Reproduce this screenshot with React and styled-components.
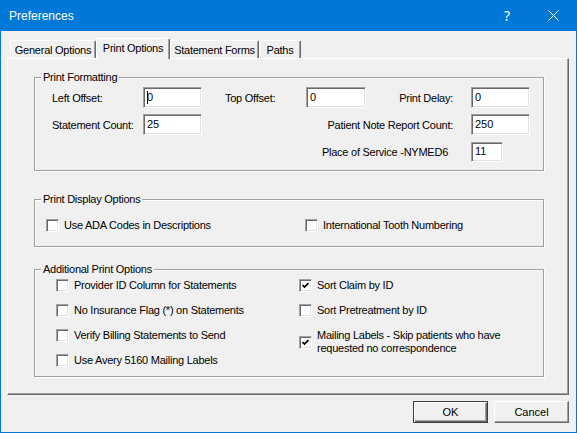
import React from "react";
import styled, { createGlobalStyle } from "styled-components";

const GlobalStyle = createGlobalStyle`
  html, body {
    margin: 0;
    padding: 0;
    background: #f0f0f0;
  }
  body {
    font-family: "Liberation Sans", Arial, sans-serif;
    font-size: 11px;
    color: #000;
  }
  * {
    box-sizing: border-box;
  }
`;

const Window = styled.div`
  width: 577px;
  height: 433px;
  display: flex;
  flex-direction: column;
  background: #0078d7;
  padding: 0 1px 1px;
`;

const TitleBar = styled.div`
  height: 31px;
  flex: none;
  display: flex;
  align-items: center;
  color: #fff;
  font-family: "Liberation Sans", Arial, sans-serif;
  font-size: 12px;
  padding-left: 8px;
`;

const Title = styled.span`
  flex: 1;
`;

const TitleButton = styled.div`
  width: 46px;
  height: 31px;
  display: flex;
  align-items: center;
  justify-content: center;
  font-family: "Noto Sans", sans-serif;
  font-size: 14px;
`;

const Body = styled.div`
  flex: 1;
  background: #f0f0f0;
  padding: 7px 7px 0 6px;
  display: flex;
  flex-direction: column;
  letter-spacing: -0.25px;
`;

const TabStrip = styled.div`
  height: 20px;
  display: flex;
  align-items: flex-end;
  padding-left: 3px;
`;

const Tab = styled.div`
  width: ${(p) => p.$w}px;
  height: ${(p) => (p.$active ? 21 : 18)}px;
  margin-bottom: ${(p) => (p.$active ? -1 : 0)}px;
  padding-bottom: ${(p) => (p.$active ? 3 : 0)}px;
  position: relative;
  z-index: ${(p) => (p.$active ? 1 : 0)};
  background: #f0f0f0;
  border-top: 1px solid #fff;
  border-left: 1px solid #fff;
  border-right: 1px solid #696969;
  box-shadow: inset -1px 0 0 #a0a0a0;
  border-radius: 2px 2px 0 0;
  display: flex;
  align-items: center;
  justify-content: center;
  white-space: nowrap;
`;

const Panel = styled.div`
  height: 337px;
  flex: none;
  border-top: 1px solid #fff;
  border-left: 1px solid #fff;
  border-right: 1px solid #696969;
  border-bottom: 1px solid #696969;
  box-shadow: inset -1px -1px 0 #a0a0a0;
  padding: 0 24px 0 26px;
`;

const Group = styled.div`
  margin-top: ${(p) => p.$top}px;
  border: 1px solid #a0a0a0;
  box-shadow: inset 1px 1px 0 #fff, 1px 1px 0 #fff;
`;

const Legend = styled.div`
  width: fit-content;
  margin: -7px 0 0 6px;
  padding: 0 2px;
  line-height: 13px;
  background: #f0f0f0;
  white-space: nowrap;
`;

const FormRows = styled.div`
  display: flex;
  flex-direction: column;
  gap: 6px;
  padding: 3px 13px 8px 17px;
`;

const Row = styled.div`
  height: 21px;
  display: flex;
  align-items: center;
`;

const Label = styled.span`
  flex: ${(p) => (p.$w ? "none" : "1")};
  width: ${(p) => (p.$w ? `${p.$w}px` : "auto")};
  margin-left: ${(p) => p.$ml || 0}px;
  padding-right: ${(p) => p.$pr || 0}px;
  text-align: ${(p) => (p.$right ? "right" : "left")};
  white-space: nowrap;
`;

const Field = styled.div`
  width: ${(p) => p.$w}px;
  height: ${(p) => p.$h || 21}px;
  margin-right: ${(p) => p.$mr || 0}px;
  flex: none;
  background: #fff;
  border-top: 1px solid #a0a0a0;
  border-left: 1px solid #a0a0a0;
  border-right: 1px solid #fff;
  border-bottom: 1px solid #fff;
  box-shadow: inset 1px 1px 0 #696969, inset -1px -1px 0 #e3e3e3;
  display: flex;
  align-items: center;
  padding: 0 0 1px 3px;
  letter-spacing: 0;
`;

const Caret = styled.span`
  display: inline-block;
  width: 1px;
  height: 13px;
  background: #000;
  margin-right: -1px;
`;

const CheckGrid = styled.div`
  display: grid;
  grid-template-columns: ${(p) => p.$col}px 1fr;
  padding: ${(p) => p.$pad};
`;

const CheckColumn = styled.div`
  display: flex;
  flex-direction: column;
  gap: 12px;
`;

const CheckItem = styled.div`
  display: flex;
  align-items: center;
  gap: 5px;
  line-height: 13px;
  min-height: 13px;
`;

const Box = styled.span`
  width: 13px;
  height: 13px;
  flex: none;
  background: #fff;
  border-top: 1px solid #a0a0a0;
  border-left: 1px solid #a0a0a0;
  border-right: 1px solid #fff;
  border-bottom: 1px solid #fff;
  box-shadow: inset 1px 1px 0 #696969, inset -1px -1px 0 #e3e3e3;
  display: flex;
  align-items: center;
  justify-content: center;
`;

const ButtonRow = styled.div`
  margin-top: 6px;
  display: flex;
  justify-content: flex-end;
  gap: 6px;
`;

const Button = styled.button`
  width: 75px;
  height: 22px;
  font-family: "Liberation Sans", Arial, sans-serif;
  font-size: 11px;
  color: #000;
  background: #f0f0f0;
  padding: 0;
  border: 1px solid;
  border-color: ${(p) =>
    p.$default ? "#3c3c3c" : "#fff #696969 #696969 #fff"};
  box-shadow: ${(p) =>
    p.$default
      ? "inset 1px 1px 0 #fff, inset -1px -1px 0 #696969, inset -2px -2px 0 #a0a0a0"
      : "inset -1px -1px 0 #a0a0a0"};
`;

const Check = ({ checked, children }) => (
  <CheckItem>
    <Box>
      {checked && (
        <svg width="7" height="7" viewBox="0 0 7 7">
          <path d="M0.5 3 L2.5 5 L6.5 1" fill="none" stroke="#000" strokeWidth="1.7" />
        </svg>
      )}
    </Box>
    <span>{children}</span>
  </CheckItem>
);

export default function App() {
  return (
    <>
      <GlobalStyle />
      <Window>
        <TitleBar>
          <Title>Preferences</Title>
          <TitleButton>?</TitleButton>
          <TitleButton>
            <svg width="11" height="11" viewBox="0 0 11 11">
              <path d="M0.5 0.5 L10.5 10.5 M10.5 0.5 L0.5 10.5" stroke="#fff" strokeWidth="1" />
            </svg>
          </TitleButton>
        </TitleBar>
        <Body>
          <TabStrip>
            <Tab $w={86}>General Options</Tab>
            <Tab $w={74} $active>Print Options</Tab>
            <Tab $w={89}>Statement Forms</Tab>
            <Tab $w={42}>Paths</Tab>
          </TabStrip>
          <Panel>
            <Group $top={18}>
              <Legend>Print Formatting</Legend>
              <FormRows>
                <Row>
                  <Label $w={91}>Left Offset:</Label>
                  <Field $w={59}>
                    <Caret />0
                  </Field>
                  <Label $w={81} $ml={23}>Top Offset:</Label>
                  <Field $w={60}>0</Field>
                  <Label $right $pr={18}>Print Delay:</Label>
                  <Field $w={59}>0</Field>
                </Row>
                <Row>
                  <Label $w={91}>Statement Count:</Label>
                  <Field $w={59}>25</Field>
                  <Label $right $pr={18}>Patient Note Report Count:</Label>
                  <Field $w={59}>250</Field>
                </Row>
                <Row>
                  <Label $right $pr={23}>Place of Service -NYMED6</Label>
                  <Field $w={32} $h={20} $mr={27}>11</Field>
                </Row>
              </FormRows>
            </Group>

            <Group $top={28}>
              <Legend>Print Display Options</Legend>
              <CheckGrid $col={259} $pad="13px 0 14px 11px">
                <Check>Use ADA Codes in Descriptions</Check>
                <Check>International Tooth Numbering</Check>
              </CheckGrid>
            </Group>

            <Group $top={22}>
              <Legend>Additional Print Options</Legend>
              <CheckGrid $col={243} $pad="3px 0 9px 21px">
                <CheckColumn>
                  <Check>Provider ID Column for Statements</Check>
                  <Check>No Insurance Flag (*) on Statements</Check>
                  <Check>Verify Billing Statements to Send</Check>
                  <Check>Use Avery 5160 Mailing Labels</Check>
                </CheckColumn>
                <CheckColumn>
                  <Check checked>Sort Claim by ID</Check>
                  <Check>Sort Pretreatment by ID</Check>
                  <Check checked>
                    Mailing Labels - Skip patients who have
                    <br />
                    requested no correspondence
                  </Check>
                </CheckColumn>
              </CheckGrid>
            </Group>
          </Panel>
          <ButtonRow>
            <Button $default>OK</Button>
            <Button>Cancel</Button>
          </ButtonRow>
        </Body>
      </Window>
    </>
  );
}
